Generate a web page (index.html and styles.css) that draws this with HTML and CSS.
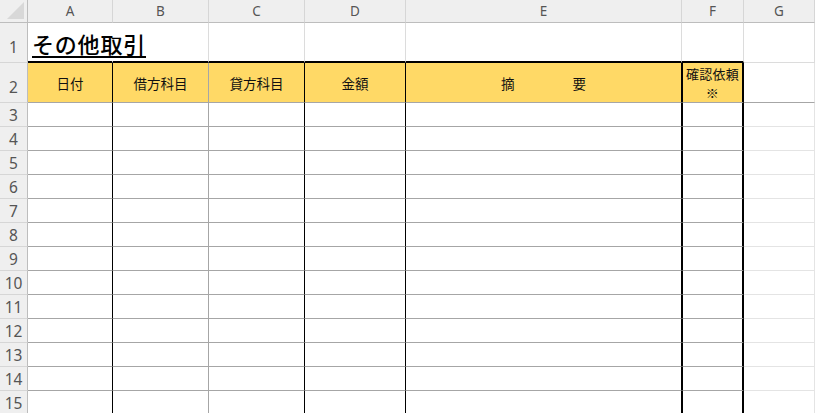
FILE: index.html
```html
<!DOCTYPE html>
<html lang="ja">
<head>
<meta charset="utf-8">
<title>その他取引</title>
<link rel="stylesheet" href="styles.css">
</head>
<body>
<div class="sheet">
  <div class="corner"><svg width="27" height="22" viewBox="0 0 27 22"><polygon points="7,19 24,19 24,2" fill="#d8d8d8"/></svg></div>
  <div class="ch">A</div><div class="ch">B</div><div class="ch">C</div><div class="ch">D</div><div class="ch">E</div><div class="ch">F</div><div class="ch">G</div>

  <div class="rh tall">1</div>
  <div class="r1 top a"><span class="title">その他取引</span></div>
  <div class="r1 top"></div><div class="r1 top"></div><div class="r1 top"></div><div class="r1 top"></div><div class="r1 top"></div><div class="r1"></div>

  <div class="rh tall">2</div>
  <div class="hd a">日付</div>
  <div class="hd b">借方科目</div>
  <div class="hd c">貸方科目</div>
  <div class="hd d">金額</div>
  <div class="hd e"><span>摘</span><span>要</span></div>
  <div class="hd f"><span class="two">確認依頼</span><span class="two">※</span></div>
  <div class="g g2"></div>

  <div class="rh">3</div><div class="rd a"></div><div class="rd b"></div><div class="rd c"></div><div class="rd d"></div><div class="rd e"></div><div class="rd f"></div><div class="g"></div>
  <div class="rh">4</div><div class="rd a"></div><div class="rd b"></div><div class="rd c"></div><div class="rd d"></div><div class="rd e"></div><div class="rd f"></div><div class="g"></div>
  <div class="rh">5</div><div class="rd a"></div><div class="rd b"></div><div class="rd c"></div><div class="rd d"></div><div class="rd e"></div><div class="rd f"></div><div class="g"></div>
  <div class="rh">6</div><div class="rd a"></div><div class="rd b"></div><div class="rd c"></div><div class="rd d"></div><div class="rd e"></div><div class="rd f"></div><div class="g"></div>
  <div class="rh">7</div><div class="rd a"></div><div class="rd b"></div><div class="rd c"></div><div class="rd d"></div><div class="rd e"></div><div class="rd f"></div><div class="g"></div>
  <div class="rh">8</div><div class="rd a"></div><div class="rd b"></div><div class="rd c"></div><div class="rd d"></div><div class="rd e"></div><div class="rd f"></div><div class="g"></div>
  <div class="rh">9</div><div class="rd a"></div><div class="rd b"></div><div class="rd c"></div><div class="rd d"></div><div class="rd e"></div><div class="rd f"></div><div class="g"></div>
  <div class="rh">10</div><div class="rd a"></div><div class="rd b"></div><div class="rd c"></div><div class="rd d"></div><div class="rd e"></div><div class="rd f"></div><div class="g"></div>
  <div class="rh">11</div><div class="rd a"></div><div class="rd b"></div><div class="rd c"></div><div class="rd d"></div><div class="rd e"></div><div class="rd f"></div><div class="g"></div>
  <div class="rh">12</div><div class="rd a"></div><div class="rd b"></div><div class="rd c"></div><div class="rd d"></div><div class="rd e"></div><div class="rd f"></div><div class="g"></div>
  <div class="rh">13</div><div class="rd a"></div><div class="rd b"></div><div class="rd c"></div><div class="rd d"></div><div class="rd e"></div><div class="rd f"></div><div class="g"></div>
  <div class="rh">14</div><div class="rd a"></div><div class="rd b"></div><div class="rd c"></div><div class="rd d"></div><div class="rd e"></div><div class="rd f"></div><div class="g"></div>
  <div class="rh">15</div><div class="rd a"></div><div class="rd b"></div><div class="rd c"></div><div class="rd d"></div><div class="rd e"></div><div class="rd f"></div><div class="g"></div>
</div>
</body>
</html>
```

FILE: styles.css
```css
html, body {
  margin: 0;
  padding: 0;
  background: #ffffff;
  overflow: hidden;
}

.sheet {
  display: grid;
  grid-template-columns: 28px 85px 96px 96px 101px 276px 62px 71px;
  grid-template-rows: 23px 40px 40px repeat(13, 24px);
  width: 815px;
  font-family: "Noto Sans CJK JP", "Noto Sans", sans-serif;
}

.sheet > div {
  box-sizing: border-box;
  border-right: 1px solid #dcdcdc;
  border-bottom: 1px solid #dcdcdc;
  min-width: 0;
}

.corner {
  background: #efefef;
  border-right-color: #bdbdbd !important;
  border-bottom-color: #bdbdbd !important;
  display: flex;
}

.ch {
  background: #efefef;
  border-right-color: #d6d6d6 !important;
  border-bottom-color: #bdbdbd !important;
  display: flex;
  align-items: center;
  justify-content: center;
  font-family: "Noto Sans", sans-serif;
  font-size: 13.5px;
  color: #555555;
  padding-bottom: 1px;
}

.rh {
  background: #efefef;
  border-right-color: #bdbdbd !important;
  border-bottom-color: #d6d6d6 !important;
  display: flex;
  align-items: flex-end;
  justify-content: center;
  font-family: "Noto Sans", sans-serif;
  font-size: 15.5px;
  line-height: 20px;
  color: #555555;
  padding-bottom: 1px;
}

.rh.tall {
  padding-bottom: 5px;
}

.r1.top {
  border-bottom: 2px solid #000000 !important;
}

.r1.a {
  display: flex;
  align-items: flex-end;
  padding-left: 4px;
  padding-bottom: 5px;
  overflow: visible;
}

.title {
  white-space: nowrap;
  font-family: "Noto Sans CJK JP", sans-serif;
  font-size: 22px;
  font-weight: 500;
  letter-spacing: 0.8px;
  line-height: 26px;
  color: #000000;
  text-decoration: underline;
  text-decoration-thickness: 2px;
  text-underline-offset: 3px;
}

.hd {
  background: #ffd966;
  border-bottom-color: #a6a6a6 !important;
  display: flex;
  align-items: center;
  justify-content: center;
  font-size: 13.5px;
  line-height: 16px;
  color: #111111;
}

.hd.e {
  gap: 58px;
}

.hd.f {
  flex-direction: column;
  align-items: center;
  justify-content: flex-start;
  padding-top: 1px;
}

.two {
  display: block;
  font-size: 13px;
  line-height: 19px;
  height: 19px;
  white-space: nowrap;
  letter-spacing: 0.3px;
}

.rd {
  border-bottom-color: #a6a6a6 !important;
}

.a {
  border-right-color: #000000 !important;
}

.r1.a {
  border-right-color: #ffffff !important;
}

.b {
  border-right-color: #a6a6a6 !important;
}

.c, .d, .e {
  border-right-color: #000000 !important;
}

.f {
  border-left: 1px solid #000000;
  border-right: 2px solid #000000 !important;
}

.g {
  border-right-color: #e4e4e4 !important;
  border-bottom-color: #e4e4e4 !important;
}

.g2 {
  border-bottom-color: #a6a6a6 !important;
}
```
